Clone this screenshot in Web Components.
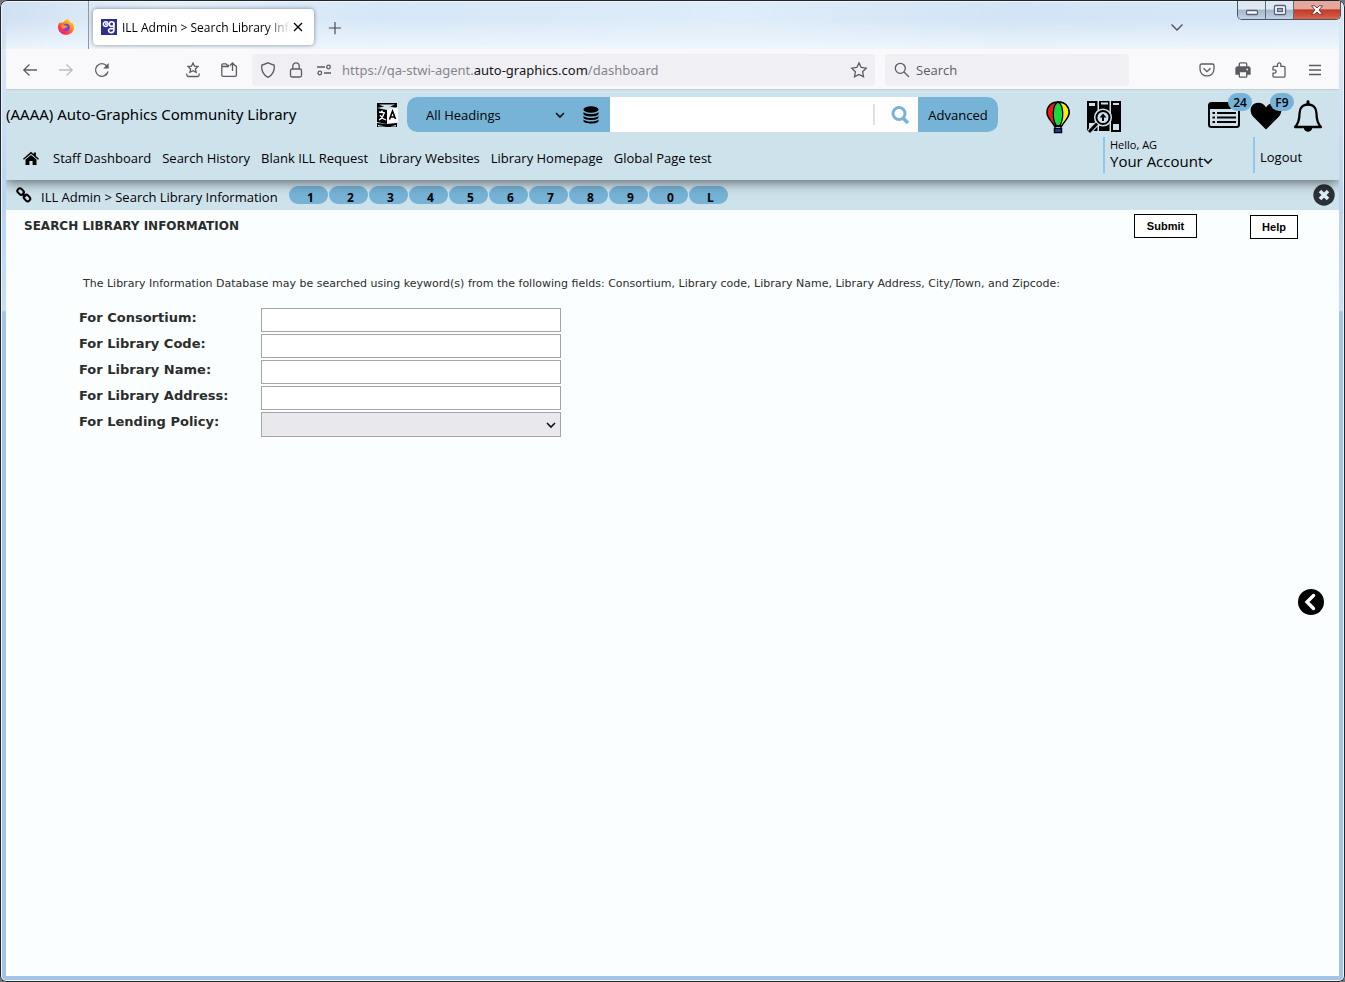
<!DOCTYPE html>
<html lang="en">
<head>
<meta charset="utf-8">
<title>ILL Admin &gt; Search Library Information</title>
<style>
  html, body { margin: 0; }
  body { background: #6f7378; font: 13px/18px "Open Sans", "Noto Sans", sans-serif; color: #000; }
</style>
</head>
<body>
<browser-window>
  <title-bar slot="chrome"></title-bar>
  <tool-bar slot="chrome"></tool-bar>
  <site-header></site-header>
  <crumb-bar></crumb-bar>
  <library-search></library-search>
</browser-window>

<script>
const ICONS = {
  firefox: ['0 0 16 16', `<defs><linearGradient id="f" x1="1" y1="0" x2="0.2" y2="1"><stop offset="0" stop-color="#fff04a"/><stop offset=".4" stop-color="#ff980e"/><stop offset=".75" stop-color="#ff3750"/><stop offset="1" stop-color="#e0208a"/></linearGradient></defs>
    <path fill="url(#f)" d="M10.2 0c.2 1.200 1.100 1.900 2.200 3 1 .9 1.400 1 1.500 1.400.4-.2.5-.7.5-1C15.500 5 16 6.600 16 8.200c0 4.300-3.500 7.600-8 7.600s-8-3.400-8-7.800C0 6 .8 4.300 2 3c.1.600.3 1 .6 1.200C3.400 3.500 4.500 3 5.600 3.200 6.700 1.500 8.300.3 10.200 0z"/><circle cx="8.200" cy="8.400" r="3.600" fill="#7b3fe4"/><path fill="#ff980e" d="M3.500 6.500c1.500-.8 3.300-.6 4.500.3 1 .4 1.600.6 1.500 1-.3.700-1.800.6-2.600 1.400C6 10 5.500 9.700 4.700 9.800 3.500 9 3.200 7.700 3.500 6.500z"/>`],
  agent: ['0 0 16 16', `<rect width="16" height="16" fill="#2b2f92"/><g fill="none" stroke="#fff" stroke-width="1.600"><path d="M7 3.600C5 2 2.200 3 2.300 5.200 2.400 7.600 5.500 8 7 6.200"/><circle cx="10.600" cy="5" r="2.300"/><path d="M4 5h4.300M12.900 3.500V11c0 3.400-5.400 3.400-5.400.5 0-1.700 2.500-2.200 5.400-1.700"/></g>`],
  close: ['0 0 16 16', '<path d="M4 4l8 8M12 4l-8 8"/>'],
  plus: ['0 0 16 16', '<path d="M8 1v14M1 8h14"/>'],
  chevron: ['0 0 16 16', '<path d="M2.500 5.500L8 11l5.500-5.500"/>'],
  arrow: ['0 0 10 10', '<path d="M1 3l4 4 4-4" stroke="#111" stroke-width="1.600"/>'],
  back: ['0 0 16 16', '<path d="M15 8H1.800M7.500 2.500L1.800 8l5.700 5.500"/>'],
  forward: ['0 0 16 16', '<path d="M1 8h13.200M8.500 2.500L14.200 8l-5.700 5.500"/>'],
  reload: ['0 0 16 16', '<path d="M14 9.500A6.300 6.300 0 1 1 12.800 4"/><path d="M14.700 1v5.500H9.200z" fill="currentColor" stroke="none"/>'],
  library: ['0 0 16 16', '<path d="M8 1l1.500 3.200 3.400.4-2.500 2.300.7 3.400L8 8.700l-3.100 1.600.7-3.400L3.100 4.600l3.400-.4zM1.800 11.500v1.300c0 1 .7 1.700 1.700 1.700h9c1 0 1.700-.7 1.700-1.700v-1.300"/>'],
  folder: ['0 0 16 16', '<path d="M8 3.500H6.500L5 1.800H2C1.300 1.800.8 2.300.8 3v10c0 .8.5 1.300 1.300 1.300h12c.8 0 1.300-.5 1.300-1.300V5c0-.8-.5-1.500-1.300-1.500M1 4.500h7M11.500 9V1M8.800 3.700L11.500 1l2.700 2.700"/>'],
  shield: ['0 0 16 16', '<path d="M8 .8l6.300 2.500c.3 4.700-1.300 9.700-6.300 12C3 13 1.400 8 1.700 3.300z"/>'],
  lock: ['0 0 16 16', '<rect x="2.500" y="7" width="11" height="8" rx="1.500"/><path d="M4.800 7V4c0-4.200 6.400-4.200 6.400 0v3"/>'],
  toggles: ['0 0 16 16', '<path d="M1 5h8M8 11h7"/><circle cx="12.500" cy="5" r="1.800"/><circle cx="3.800" cy="11" r="1.800"/>'],
  star: ['0 0 16 16', '<path d="M8 .9l2.200 4.600 5 .7-3.600 3.500.9 5L8 12.400l-4.500 2.300.9-5L.8 6.200l5-.7z"/>'],
  glass: ['0 0 16 16', '<circle cx="6.300" cy="6.300" r="5"/><path d="M10 10l5 5"/>'],
  pocket: ['0 0 16 16', '<path d="M2.500 2h11c.8 0 1.500.6 1.500 1.400V7c0 9.200-14 9.200-14 0V3.400C1 2.600 1.700 2 2.500 2zM4.500 6.300L8 9.600l3.500-3.300"/>'],
  printer: ['0 0 16 16', '<rect x="4.300" y=".8" width="7.400" height="5" rx="1"/><path d="M2.500 5h11A1.500 1.500 0 0 1 15 6.500V12H1V6.500A1.500 1.500 0 0 1 2.500 5z" fill="currentColor"/><rect x="4.300" y="9.500" width="7.400" height="5.700" rx=".8" fill="#f9f9fb"/><path d="M11.500 7.500h1.500" stroke="#f9f9fb"/>'],
  puzzle: ['0 0 16 16', '<path d="M2 5.500c0-.7.500-1.200 1.200-1.200h3.300V3c0-2.800 3.400-2.800 3.400 0v1.300h2.900c.7 0 1.200.5 1.200 1.200V14c0 .7-.5 1.200-1.200 1.200H3.200c-.7 0-1.200-.5-1.200-1.200v-2.800h1.300c2.500 0 2.500-3.400 0-3.400H2z"/>'],
  menu: ['0 0 16 16', '<path d="M2 3.500h12M2 8h12M2 12.500h12"/>'],
  minimize: ['0 0 14 10', '<rect x="1.500" y="5.500" width="11" height="4" rx="1" fill="#fff" stroke="#53607a"/>'],
  maximize: ['0 0 14 10', '<rect x="1.500" y=".5" width="11" height="9" rx="1" fill="#fff" stroke="#53607a"/><rect x="4.500" y="3.500" width="5" height="3" fill="#a9bbd2" stroke="#53607a"/>'],
  shut: ['0 0 14 10', '<path d="M1.500.8h3.300L7 3 9.200.8h3.300L9 5l3.500 4.200H9.200L7 7 4.800 9.200H1.500L5 5z" fill="#fff" stroke="#5b3138" stroke-width=".9"/>'],
  translate: ['0 0 22 26', '<path d="M1 1h20v5L11 4 1 6z" fill="#000"/><path d="M3 2.500h16L11 6z" fill="#cee2ec"/><path d="M1 6l10 2v14L1 20z" fill="#000"/><path d="M11 8l11-3v15l-11 2z" fill="#fff"/><path d="M1 21l10 1 10-1v4H1z" fill="#000"/><path d="M2 23l8 1.500H2zM20 23l-6 1.500h6z" fill="#cee2ec"/><g fill="none" stroke="#fff" stroke-width="1.300"><path d="M3 10l6 1M6 8.500V11M8 11c-1 4-3 6-5 7M4 13c1 2 3 4 6 5"/></g><path d="M13.500 17.500L16.500 9l3 8M14.500 15h4.200" fill="none" stroke="#000" stroke-width="1.600"/>'],
  database: ['0 0 16 18', '<ellipse cx="8" cy="3.500" rx="7.500" ry="3.200" fill="#000"/><path d="M.5 6c3 2.700 12 2.700 15 0v2.200c-1 3-14 3-15 0zM.5 10c3 2.700 12 2.700 15 0v1.800c-1 3-14 3-15 0zM.5 13.500c3 2.700 12 2.700 15 0v1.700c-1 3-14 3-15 0z" fill="#000"/>'],
  balloon: ['0 0 24 32', '<path d="M12 1C5 1 1 5.500 1 11.500 1 17 5.500 20 8.500 25h7C18.500 20 23 17 23 11.500 23 5.500 19 1 12 1z" fill="#e81a12" stroke="#000" stroke-width="1.500"/><path d="M12 1c7 0 11 4.500 11 10.500 0 5.500-4.500 8.500-7.500 13.500H12z" fill="#f4ee16" stroke="#000"/><path d="M12 1c-6 3-6 18-1.500 24h3C18 19 18 4 12 1z" fill="#18d83b" stroke="#000" stroke-width="1.300"/><path d="M8 25h8M9 25v3m6-3v3" stroke="#000"/><path d="M8.500 27.500h7v4h-7z" fill="#1c3fb5" stroke="#000" stroke-width="1.500"/>'],
  catalog: ['0 0 34 32', '<path d="M0 0h10.500v30H0zM12 0h10.500v30H12zM24 0h10v31H24z" fill="#000"/><path d="M2 2h6v3H2zM14 1.500h7v2h-7zM26 2h6v2h-6zM2 22h6v4l-4 4H2zM26 23h6v6h-6z" fill="#cee2ec"/><circle cx="16" cy="16.500" r="8.300" fill="#000" stroke="#cee2ec" stroke-width="1.500"/><circle cx="16" cy="16.500" r="5.500" fill="#cee2ec"/><path d="M16 12.500l3.500 4H17V20h-2v-3.500h-2.500z" fill="#000"/><path d="M10.500 22L2 31" stroke="#cee2ec" stroke-width="5"/><path d="M10 22.500L2 31" stroke="#000" stroke-width="3"/>'],
  list: ['0 0 32 26', '<rect x="1" y="1" width="30" height="24" rx="2.500" fill="#cee2ec" stroke="#000" stroke-width="2"/><path d="M1 1h30v6H1z" fill="#000"/><path d="M9 11h19M9 15.500h19M9 20h19M4.500 11H7M4.500 15.500H7M4.500 20H7" stroke="#000" stroke-width="2.200"/>'],
  heart: ['0 0 32 28', '<path d="M16 27.500L3 14.500C-1.500 9.500.5 1 8 .7c4 0 6.500 2 8 4.800 1.500-2.800 4-4.800 8-4.800 7.500.3 9.500 8.800 5 13.800z" fill="#000"/>'],
  bell: ['0 0 30 32', '<path d="M15 4.500c5.500 0 8.500 4 8.500 9 0 7 1 10 4.500 13.500H2c3.500-3.500 4.500-6.500 4.500-13.500 0-5 3-9 8.500-9z" fill="none" stroke="#000" stroke-width="2.300" stroke-linejoin="round"/><path d="M13.500 4.500V1.800c0-2 3-2 3 0v2.700M10.800 28c.6 5 7.800 5 8.400 0z" fill="#000"/>'],
  home: ['0 0 16 14', '<path d="M8 .8l2.700 2.400V1.500h2.200v3.600L16 7.800l-.9 1L8 2.700.9 8.800l-.9-1z" fill="#000"/><path d="M8 3.900l5.500 4.700V14H9.600v-4H6.400v4H2.500V8.600z" fill="#000"/>'],
  chain: ['0 0 16 16', '<g fill="none" stroke="#000" stroke-width="2"><rect x="-3.500" y="-2.500" width="7" height="5" rx="2.500" transform="translate(4.600 4.600) rotate(45)"/><rect x="-3.500" y="-2.500" width="7" height="5" rx="2.500" transform="translate(11 11) rotate(45)"/><path d="M6.200 6.200l3.600 3.600"/></g>'],
  dismiss: ['0 0 22 22', '<circle cx="11" cy="11" r="10.700" fill="#2b3135"/><path d="M7 7l8 8M15 7l-8 8" stroke="#dfeff6" stroke-width="3.600"/>'],
  collapse: ['0 0 26 26', '<circle cx="13" cy="13" r="13" fill="#000"/><path d="M15.500 6.500L9 13l6.500 6.500" fill="none" stroke="#fff" stroke-width="3.400" stroke-linecap="round"/>']
};

class BaseElement extends HTMLElement {
  connectedCallback() {
    if (this.shadowRoot) return;
    const t = document.createElement('template');
    t.innerHTML = `<style>
      *, :host { box-sizing: border-box; }
      button, input, select { font: inherit; color: inherit; margin: 0; padding: 0; border: 0; background: none; border-radius: 0; }
      button { display: flex; align-items: center; justify-content: center; }
      a { color: inherit; text-decoration: none; }
      ${this.css()}</style>${this.html()}`;
    this.attachShadow({ mode: 'open' }).append(t.content.cloneNode(true));
  }
  css() { return ''; }
  html() { return ''; }
}
const define = (tag, css, html) => customElements.define(tag, class extends BaseElement {
  css() { return css; }
  html() { return typeof html === 'function' ? html(this) : html; }
});

define('ui-icon', `
  :host { display: inline-flex; flex: none; width: 16px; height: 16px; }
  svg { width: 100%; height: 100%; display: block; overflow: visible; }`,
  el => {
    const [box, body] = ICONS[el.getAttribute('name')];
    return `<svg viewBox="${box}" aria-hidden="true" fill="none" stroke="${box === '0 0 16 16' && !/<defs>|<rect width|#000/.test(body) ? 'currentColor' : 'none'}" stroke-width="1.300">${body}</svg>`;
  });

define('browser-window', `
  :host { display: flex; flex-direction: column; min-height: 100vh; padding: 0 6px 6px; border-radius: 7px 7px 6px 6px;
    background: linear-gradient(100deg, #cfe0f2, #e4effa 12%, #d6e7f7 28%, #dfecf9 55%, #d2e4f5 75%, #d8e8f7) 0 0 / 100% 49px no-repeat,
      linear-gradient(#dbe9f8 49px, #b9d3f0 200px, #cadff5 310px, #a3c4e4 312px);
    box-shadow: inset 0 0 0 1px #22262b, inset 0 0 0 2px #eef6fd; }
  main { flex: 1; display: flex; flex-direction: column; background: #fafeff; }
  ::slotted(library-search) { flex: 1; }`,
  `<slot name="chrome"></slot><main><slot></slot></main>`);

define('title-bar', `
  :host { display: flex; height: 49px; align-items: flex-start; padding: 1px 0 0;
    background: linear-gradient(transparent 40%, rgba(245,250,255,.75)); }
  .pin { width: 83px; height: 48px; padding: 18px 0 0 52px; border-right: 1px solid #8f9aa6; }
  .tab { display: flex; align-items: center; width: 221px; height: 36px; margin: 8px 0 0 4px; padding: 0 8px; background: #fff; border-radius: 4px; box-shadow: 0 0 4px rgba(0,0,0,.45); font-size: 12px; }
  .name { flex: 1; margin-left: 5px; padding-top: 2px; overflow: hidden; white-space: nowrap; -webkit-mask-image: linear-gradient(90deg, #000 86%, transparent); }
  .new { width: 36px; height: 36px; margin: 9px 0 0 3px; color: #45454f; }
  .new ui-icon { width: 14px; height: 14px; }
  .gap { flex: 1; }
  .all { width: 36px; height: 36px; margin-top: 8px; color: #4c4c58; }
  .win { display: flex; margin: 0 -2px 0 42px; height: 19px; border: 1px solid #4b5568; border-top: 0; border-radius: 0 0 5px 5px; overflow: hidden; }
  .win button { width: 28px; background: linear-gradient(#dfe8f2 45%, #a5b6cb 50%, #c3d2e3); border-right: 1px solid #5f6b7e; }
  .win button.x { width: 46px; border: 0; background: linear-gradient(#e4a89f 42%, #c13a25 50%, #d9654a); }
  .win ui-icon { width: 14px; height: 10px; }
  .x16 { width: 16px; height: 16px; }`,
  `<span class="pin"><ui-icon name="firefox"></ui-icon></span>
   <div class="tab"><ui-icon name="agent"></ui-icon><span class="name">ILL Admin &gt; Search Library Information</span><button class="x16" aria-label="Close tab"><ui-icon name="close"></ui-icon></button></div>
   <button class="new" aria-label="New tab"><ui-icon name="plus"></ui-icon></button><span class="gap"></span>
   <button class="all" aria-label="List all tabs"><ui-icon name="chevron"></ui-icon></button>
   <div class="win"><button aria-label="Minimize"><ui-icon name="minimize"></ui-icon></button><button aria-label="Maximize"><ui-icon name="maximize"></ui-icon></button><button class="x" aria-label="Close"><ui-icon name="shut"></ui-icon></button></div>`);

define('tool-bar', `
  :host { display: flex; align-items: center; height: 41px; padding: 1px 6px 0; background: #f9f9fb; border-bottom: 1px solid #ccccd1; color: #5b5b66; }
  button { flex: none; width: 36px; height: 32px; }
  .off { color: #bcbcc2; }
  .mid { display: flex; margin: 0 5px 0 55px; }
  .url { flex: 1; display: flex; align-items: center; height: 32px; padding: 0 2px; background: #f0f0f4; border-radius: 4px; }
  .url button { width: 28px; }
  .text { flex: 1; margin-left: 4px; padding-top: 1px; color: #84848c; white-space: nowrap; overflow: hidden; font-family: "Noto Sans", sans-serif; }
  .text b { font-weight: 400; color: #15141a; }
  .find { display: flex; align-items: center; width: 244px; height: 32px; margin: 0 60px 0 10px; padding: 0 9px; background: #f0f0f4; border-radius: 4px; }
  .find input { flex: 1; min-width: 0; margin-left: 6px; padding-top: 1px; outline: 0; }
  .find input::placeholder { color: #5b5b66; opacity: 1; }`,
  `<button aria-label="Back"><ui-icon name="back"></ui-icon></button><button class="off" aria-label="Forward"><ui-icon name="forward"></ui-icon></button><button aria-label="Reload"><ui-icon name="reload"></ui-icon></button>
   <span class="mid"><button aria-label="Bookmarks"><ui-icon name="library"></ui-icon></button><button aria-label="Open file"><ui-icon name="folder"></ui-icon></button></span>
   <div class="url"><button aria-label="Tracking protection"><ui-icon name="shield"></ui-icon></button><button aria-label="Site security"><ui-icon name="lock"></ui-icon></button><button aria-label="Permissions"><ui-icon name="toggles"></ui-icon></button>
     <div class="text" role="textbox" contenteditable="true" spellcheck="false" aria-label="Address">https://qa-stwi-agent.<b>auto-graphics.com</b>/dashboard</div>
     <button aria-label="Bookmark this page"><ui-icon name="star"></ui-icon></button></div>
   <label class="find"><ui-icon name="glass"></ui-icon><input type="text" placeholder="Search" aria-label="Search the web"></label>
   <button aria-label="Pocket"><ui-icon name="pocket"></ui-icon></button><button aria-label="Print"><ui-icon name="printer"></ui-icon></button><button aria-label="Extensions"><ui-icon name="puzzle"></ui-icon></button><button aria-label="Menu"><ui-icon name="menu"></ui-icon></button>`);

define('catalog-search', `
  :host { display: flex; height: 35px; border-radius: 10px; overflow: hidden; background: #fff; }
  .scope { display: flex; align-items: center; width: 203px; background: #76b3d6; }
  .pick { display: grid; width: 158px; align-items: center; }
  .pick > * { grid-area: 1 / 1; }
  select { appearance: none; width: 100%; height: 35px; padding-left: 19px; }
  .pick ui-icon { width: 10px; height: 10px; justify-self: end; pointer-events: none; }
  .db { width: 16px; height: 18px; }
  .scope button { width: 45px; padding-left: 7px; }
  input { flex: 1; min-width: 0; padding: 0 8px; outline: 0; background: #fff; }
  .go { width: 43px; padding-left: 6px; }
  .bar { align-self: center; width: 2px; height: 21px; background: #e2e2e2; }
  .adv { width: 80px; background: #76b3d6; }`,
  `<div class="scope"><label class="pick"><select aria-label="Search scope"><option>All Headings</option></select><ui-icon name="arrow"></ui-icon></label><button aria-label="Databases"><ui-icon class="db" name="database"></ui-icon></button></div>
   <input type="text" aria-label="Search terms"><span class="bar"></span>
   <button class="go" aria-label="Search"><svg width="18" height="18" viewBox="0 0 18 18" fill="none" stroke="#76b3d6"><circle cx="8" cy="7.500" r="6" stroke-width="3"/><path d="M12 12l5 5" stroke-width="3.500"/></svg></button>
   <button class="adv">Advanced</button>`);

define('badge-button', `
  :host { display: block; position: relative; }
  button { display: flex; }
  .badge { position: absolute; top: -8px; left: 20px; width: 24px; height: 18px; border-radius: 9px; background: #76b3d6; font: 600 12px/19px "Open Sans", sans-serif; text-align: center; }`,
  el => `<button aria-label="${el.getAttribute('label')}"><slot></slot></button>${el.hasAttribute('count') ? `<span class="badge">${el.getAttribute('count')}</span>` : ''}`);

define('site-header', `
  :host { display: block; position: relative; background: #cee2ec; box-shadow: 0 2px 12px rgba(0,0,0,.6); clip-path: inset(0 0 -20px 0); }
  .top, .bottom { display: flex; }
  .top { height: 47px; align-items: flex-start; padding: 7px 16px 0 0; }
  .title { width: 370px; margin: 0; font: 400 15px/35px "Noto Sans", sans-serif; white-space: nowrap; }
  .lang { width: 22px; height: 35px; margin-right: 9px; }
  .lang ui-icon { width: 22px; height: 26px; }
  catalog-search { flex: 1; }
  .tools { display: flex; align-items: flex-start; padding: 4px 0 0 48px; }
  .balloon { width: 24px; height: 32px; margin-right: 17px; }
  .catalog { width: 34px; height: 32px; margin-right: 87px; }
  .list { width: 32px; height: 26px; margin: 1px 10px 0 0; }
  .heart { width: 32px; height: 28px; margin: 1px 11px 0 0; }
  .bell { width: 30px; height: 32px; margin-top: -1px; }
  .bottom { height: 43px; }
  nav { flex: 1; display: flex; align-items: center; gap: 11px; padding: 0 0 2px 17px; white-space: nowrap; }
  nav ui-icon { width: 16px; height: 14px; display: flex; margin-right: 3px; }
  .account, .logout { height: 36px; border-left: 2px solid #8fc8ec; }
  .account { width: 150px; padding-left: 5px; }
  .account small { display: block; font-size: 11px; line-height: 16px; }
  .account button { font-size: 15px; line-height: 16px; }
  .account ui-icon { width: 10px; height: 10px; }
  .logout { width: 86px; padding-left: 5px; line-height: 40px; }`,
  `<div class="top"><h1 class="title">(AAAA) Auto-Graphics Community Library</h1>
     <button class="lang" aria-label="Language"><ui-icon name="translate"></ui-icon></button>
     <catalog-search></catalog-search>
     <div class="tools"><badge-button label="What's new"><ui-icon class="balloon" name="balloon"></ui-icon></badge-button><badge-button label="Catalog"><ui-icon class="catalog" name="catalog"></ui-icon></badge-button><badge-button label="Requests" count="24"><ui-icon class="list" name="list"></ui-icon></badge-button><badge-button label="Favorites" count="F9"><ui-icon class="heart" name="heart"></ui-icon></badge-button><badge-button label="Alerts"><ui-icon class="bell" name="bell"></ui-icon></badge-button></div></div>
   <div class="bottom"><nav><a href="#home" aria-label="Home"><ui-icon name="home"></ui-icon></a><a href="#staff">Staff Dashboard</a><a href="#history">Search History</a><a href="#blank">Blank ILL Request</a><a href="#websites">Library Websites</a><a href="#homepage">Library Homepage</a><a href="#test">Global Page test</a></nav>
     <div class="account"><small>Hello, AG</small><button>Your Account<ui-icon name="arrow"></ui-icon></button></div><div class="logout"><a href="#logout">Logout</a></div></div>`);

define('crumb-bar', `
  :host { display: flex; height: 30px; align-items: center; padding: 0 4px 0 10px; background: #cee2ec; }
  .crumbs { width: 248px; padding: 4px 0 0 9px; white-space: nowrap; }
  .keys { flex: 1; display: flex; gap: 1px; margin-left: 9px; }
  .keys button { width: 39px; height: 18px; padding: 5px 0 0 4px; border-radius: 9px; background: #76b3d6; font-weight: 700; font-size: 12px; }
  .x, .x ui-icon { width: 22px; height: 22px; }`,
  `<ui-icon name="chain"></ui-icon><div class="crumbs">ILL Admin &gt; Search Library Information</div>
   <div class="keys">${[...'1234567890L'].map(k => `<button>${k}</button>`).join('')}</div>
   <button class="x" aria-label="Close panel"><ui-icon name="dismiss"></ui-icon></button>`);

define('form-row', `
  :host { display: flex; align-items: flex-start; }
  label { width: 182px; font-weight: 700; line-height: 20px; }
  input, select { width: 300px; height: 24px; border: 1px solid #a5a5a5; background: #fff; padding: 0 4px; }
  .pick { display: grid; align-items: center; }
  .pick > * { grid-area: 1 / 1; }
  select { appearance: none; height: 25px; background: #e9e9ed; }
  ui-icon { width: 10px; height: 10px; justify-self: end; margin-right: 5px; pointer-events: none; }`,
  el => `<label for="field"><slot></slot></label>${el.hasAttribute('choice')
    ? '<span class="pick"><select id="field"><option></option></select><ui-icon name="arrow"></ui-icon></span>'
    : '<input id="field" type="text">'}`);

define('library-search', `
  :host { display: flex; color: #2c2c2c; font-family: "DejaVu Sans", Verdana, sans-serif; }
  form { flex: 1; }
  .head { display: flex; align-items: flex-start; padding: 4px 0 0 18px; }
  h2 { flex: 1; margin: 3px 0 0; font-size: 12px; line-height: 18px; }
  .head button { height: 24px; border: 1px solid #000; background: #fff; color: #000; font: 700 11px/14px "Liberation Sans", Arial, sans-serif; }
  .submit { width: 63px; }
  .help { width: 48px; margin: 1px 0 0 53px; }
  p { margin: 36px 0 15px 77px; font-size: 11px; line-height: 18px; }
  .rows { display: grid; gap: 2px; padding-left: 73px; }
  aside { display: flex; align-items: center; width: 41px; padding-top: 18px; }
  aside button, aside ui-icon { width: 26px; height: 26px; }`,
  `<form><div class="head"><h2>SEARCH LIBRARY INFORMATION</h2><button type="button" class="submit">Submit</button><button type="button" class="help">Help</button></div>
     <p>The Library Information Database may be searched using keyword(s) from the following fields: Consortium, Library code, Library Name, Library Address, City/Town, and Zipcode:</p>
     <div class="rows"><form-row>For Consortium:</form-row><form-row>For Library Code:</form-row><form-row>For Library Name:</form-row><form-row>For Library Address:</form-row><form-row choice>For Lending Policy:</form-row></div></form>
   <aside><button aria-label="Show side panel"><ui-icon name="collapse"></ui-icon></button></aside>`);
</script>
</body>
</html>
